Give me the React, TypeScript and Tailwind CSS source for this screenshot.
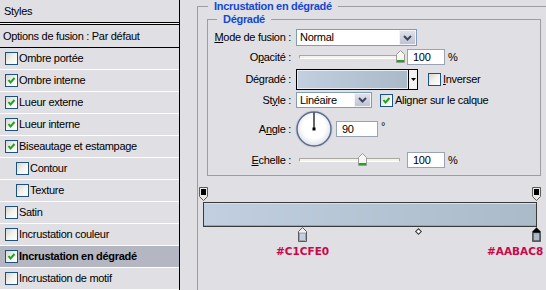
import React from "react";

const effects = [
  { label: "Ombre portée", on: false },
  { label: "Ombre interne", on: true },
  { label: "Lueur externe", on: true },
  { label: "Lueur interne", on: true },
  { label: "Biseautage et estampage", on: true },
  { label: "Contour", on: false, sub: true },
  { label: "Texture", on: false, sub: true },
  { label: "Satin", on: false },
  { label: "Incrustation couleur", on: false },
  { label: "Incrustation en dégradé", on: true, active: true },
  { label: "Incrustation de motif", on: false },
];

function Check({ on }: { on?: boolean }) {
  return (
    <span className="flex h-[13px] w-[13px] shrink-0 items-center justify-center border border-[#1c5180] bg-gradient-to-br from-[#d6d6d0] via-[#f2f2ee] to-white">
      {on && (
        <svg width="9" height="9" viewBox="0 0 9 9">
          <path d="M1.5 4 L3.5 6.5 L7.5 2" stroke="#21a121" strokeWidth="2" fill="none" />
        </svg>
      )}
    </span>
  );
}

function DropBtn() {
  return (
    <span className="flex h-full w-[17px] shrink-0 items-center justify-center border border-[#f4f4f8] bg-gradient-to-b from-[#dfe1ea] to-[#bfc3d3]">
      <svg width="9" height="6" viewBox="0 0 9 6">
        <path d="M1 1 L4.5 4.5 L8 1" stroke="#3c4660" strokeWidth="2" fill="none" />
      </svg>
    </span>
  );
}

function Thumb() {
  return (
    <svg width="9" height="13" viewBox="0 0 9 13">
      <path d="M4.5 0.5 L8.5 4.5 L8.5 12.5 L0.5 12.5 L0.5 4.5 Z" fill="#f6f6f2" stroke="#9a9a96" />
      <rect x="1" y="10" width="7" height="2" fill="#22a322" />
    </svg>
  );
}

function Slider({ at }: { at: number }) {
  return (
    <div className="relative ml-[8px] flex h-[14px] w-[101px] items-center">
      <div className="h-[4px] w-full rounded-[1px] border border-[#a8a7a1] border-b-white bg-[#f3f3ea]" />
      <div className="absolute top-0" style={{ left: at }}>
        <Thumb />
      </div>
    </div>
  );
}

function Label({ children }: { children: React.ReactNode }) {
  return <span className="w-[83px] shrink-0 text-right">{children}</span>;
}

function NumBox({ value, w, ml }: { value: string; w: string; ml: string }) {
  return (
    <div className={`${w} ${ml} flex h-[16px] items-center border border-[#9aa3b3] bg-white pl-[5px]`}>
      {value}
    </div>
  );
}

function OpacityStop() {
  return (
    <svg width="9" height="14" viewBox="0 0 9 14">
      <path d="M0.5 0.5 H8.5 V9.5 L4.5 13.5 L0.5 9.5 Z" fill="#e8e8e8" stroke="#5a5a5a" />
      <rect x="2" y="2" width="5" height="6" fill="#000" />
    </svg>
  );
}

function ColorStop({ fill, selected }: { fill: string; selected?: boolean }) {
  return (
    <svg width="9" height="15" viewBox="0 0 9 15">
      <path d="M4.5 0.5 L8.5 4.5 V14.5 H0.5 V4.5 Z" fill={selected ? "#000" : "#f0f0f0"} stroke="#5a5a5a" />
      <rect x="1.5" y="6" width="6" height="7.5" fill={fill} stroke="#7a7a7a" strokeWidth="0.6" />
    </svg>
  );
}

export default function App() {
  return (
    <div className="flex h-[290px] w-[546px] overflow-hidden bg-[#e0dfe3] font-['Liberation_Sans',Arial,sans-serif] text-[11px] leading-[13px] tracking-[-0.3px] text-black">
      <aside className="w-[180px] shrink-0 border-r border-black">
        <div className="flex h-[23px] items-center border-b border-black pl-[4px]">Styles</div>
        <div className="h-px bg-[#f4f4f6]" />
        <div className="flex h-[24px] items-center border-y border-black pl-[3px]">
          Options de fusion : Par défaut
        </div>
        {effects.map((e) => (
          <div
            key={e.label}
            className={`flex h-[22px] items-center border-b border-white ${e.sub ? "pl-[16px]" : "pl-[5px]"} ${
              e.active ? "bg-[#b4b6c2] font-bold" : ""
            }`}
          >
            <Check on={e.on} />
            <span className="ml-[1px]">{e.label}</span>
          </div>
        ))}
      </aside>

      <main className="min-w-0 flex-1 pl-[17px]">
        <fieldset className="w-[400px] border border-[#9d9ca2] p-0 pb-[40px]">
          <legend className="ml-[10px] px-[6px] font-bold text-[#1448d2]">Incrustation en dégradé</legend>

          <fieldset className="ml-[9px] w-[334px] border border-[#9d9ca2] p-0 pb-[7px] pt-[3px]">
            <legend className="ml-[9px] px-[6px] font-bold text-[#1448d2]">Dégradé</legend>

            <div className="flex h-[17px] items-center">
              <Label>
                <u>M</u>ode de fusion :
              </Label>
              <div className="ml-[5px] flex h-[17px] w-[121px] items-center border border-[#7f9db9] bg-white">
                <span className="flex-1 pl-[3px]">Normal</span>
                <DropBtn />
              </div>
            </div>

            <div className="mt-[3px] flex h-[16px] items-center">
              <Label>
                O<u>p</u>acité :
              </Label>
              <Slider at={97} />
              <NumBox value="100" w="w-[38px]" ml="ml-[7px]" />
              <span className="ml-[3px]">%</span>
            </div>

            <div className="mt-[4px] flex h-[21px] items-center">
              <Label>Dégradé :</Label>
              <div className="ml-[5px] flex h-[21px] w-[122px] border border-black">
                <div className="flex-1 border border-[#e8ecf2] bg-gradient-to-r from-[#c1cfe0] to-[#aabac8]" />
                <div className="flex w-[9px] items-center justify-center border-l border-black bg-[#f2f2f2]">
                  <svg width="5" height="3" viewBox="0 0 5 3">
                    <path d="M0 0 H5 L2.5 3 Z" fill="#000" />
                  </svg>
                </div>
              </div>
              <span className="ml-[10px]">
                <Check />
              </span>
              <span className="ml-[2px]">
                <u>I</u>nverser
              </span>
            </div>

            <div className="mt-[2px] flex h-[16px] items-center">
              <Label>
                St<u>y</u>le :
              </Label>
              <div className="ml-[5px] flex h-[16px] w-[76px] items-center border border-[#7f9db9] bg-white">
                <span className="flex-1 pl-[3px]">Linéaire</span>
                <DropBtn />
              </div>
              <span className="ml-[8px]">
                <Check on />
              </span>
              <span className="ml-[2px]">Aligner sur le calque</span>
            </div>

            <div className="mt-[2px] flex h-[38px] items-center">
              <Label>
                A<u>n</u>gle :
              </Label>
              <svg className="ml-[4px]" width="38" height="38" viewBox="0 0 38 38">
                <defs>
                  <radialGradient id="dial" cx="50%" cy="45%" r="55%">
                    <stop offset="0.6" stopColor="#ffffff" />
                    <stop offset="1" stopColor="#dcdfe8" />
                  </radialGradient>
                </defs>
                <circle cx="19" cy="19" r="18.3" fill="none" stroke="#cdd2e0" strokeWidth="1" />
                <circle cx="19" cy="19" r="17" fill="url(#dial)" stroke="#5d6c8c" strokeWidth="1.5" />
                <line x1="19" y1="2.5" x2="19" y2="19" stroke="#000" strokeWidth="1.2" />
                <rect x="17.5" y="17.5" width="3" height="3" fill="#000" />
              </svg>
              <NumBox value="90" w="w-[42px]" ml="ml-[3px]" />
              <span className="ml-[3px] self-start pt-[10px]">°</span>
            </div>

            <div className="mt-[4px] flex h-[16px] items-center">
              <Label>
                <u>E</u>chelle :
              </Label>
              <Slider at={59} />
              <NumBox value="100" w="w-[38px]" ml="ml-[7px]" />
              <span className="ml-[3px]">%</span>
            </div>
          </fieldset>

          <div className="ml-[5px] mt-[11px] w-[334px]">
            <div className="relative h-[15px]">
              <div className="absolute -left-[4px] top-0">
                <OpacityStop />
              </div>
              <div className="absolute -right-[4px] top-0">
                <OpacityStop />
              </div>
            </div>
            <div className="h-[25px] border border-[#3a3a3a] bg-gradient-to-r from-[#c1cfe0] to-[#aabac8] shadow-[inset_0_1px_0_#d6dfea,inset_0_-1px_0_#98a6b4]" />
            <div className="relative h-[18px]">
              <div className="absolute left-[95px] top-0">
                <ColorStop fill="#c1cfe0" />
              </div>
              <div className="absolute left-[213px] top-[2px] h-[5px] w-[5px] rotate-45 border border-[#333] bg-white" />
              <div className="absolute -right-[4px] top-0">
                <ColorStop fill="#aabac8" selected />
              </div>
            </div>
            <div className="relative h-[16px] font-['DejaVu_Sans',sans-serif] text-[10.5px] font-bold tracking-normal text-[#c8084a]">
              <span className="absolute left-[73px] top-0">#C1CFE0</span>
              <span className="absolute left-[284px] top-0">#AABAC8</span>
            </div>
          </div>
        </fieldset>
      </main>
    </div>
  );
}
